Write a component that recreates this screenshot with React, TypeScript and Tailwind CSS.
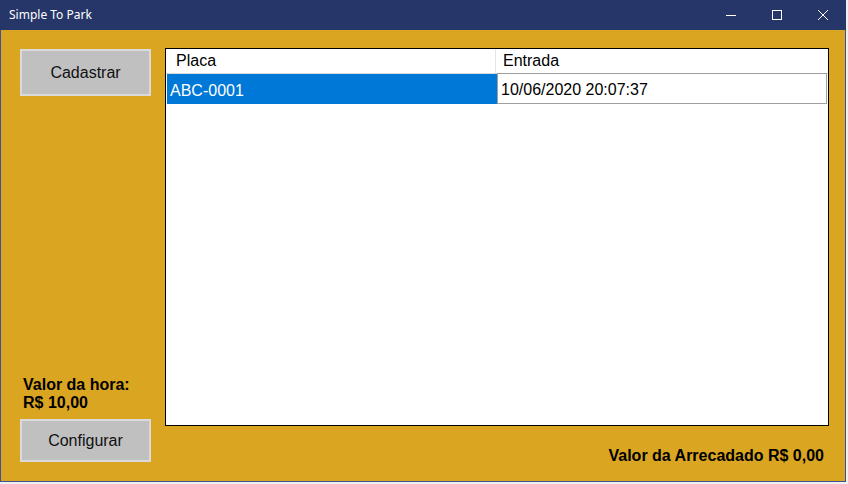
const rows = [{ placa: "ABC-0001", entrada: "10/06/2020 20:07:37" }];

const App = () => {
  return (
    <div className="w-[848px] h-[484px] bg-[#f0f0f0] overflow-hidden">
      {/* Window */}
      <div className="w-[846px] h-[482px] flex flex-col border-l border-r border-b border-[#3f5298] bg-[#daa520]">
        {/* Title bar */}
        <div className="h-[30px] -mx-px flex items-center bg-[#273669] text-white shrink-0">
          <span className="ml-[9px] text-[12px] font-['Noto_Sans',sans-serif] leading-none">
            Simple To Park
          </span>
          <div className="ml-auto flex items-center h-full">
            <div className="w-[46px] h-full flex items-center justify-center">
              <svg width="10" height="10" viewBox="0 0 10 10">
                <line x1="0" y1="5.5" x2="10" y2="5.5" stroke="white" strokeWidth="1" />
              </svg>
            </div>
            <div className="w-[46px] h-full flex items-center justify-center">
              <svg width="10" height="10" viewBox="0 0 10 10">
                <rect x="0.5" y="0.5" width="9" height="9" fill="none" stroke="white" strokeWidth="1" />
              </svg>
            </div>
            <div className="w-[46px] h-full flex items-center justify-center">
              <svg width="10" height="10" viewBox="0 0 10 10">
                <path d="M0 0L10 10M10 0L0 10" stroke="white" strokeWidth="1" />
              </svg>
            </div>
          </div>
        </div>

        {/* Body */}
        <div className="flex-1 min-h-0 flex pl-[19px] pr-[16px] pt-[18px] pb-[16px] font-['Liberation_Sans',Arial,sans-serif] text-black">
          {/* Left column */}
          <div className="w-[131px] flex flex-col pb-[3px]">
            <button className="mt-[1px] h-[47px] w-full border-2 border-[#dadada] bg-[#c0c0c0] text-[16px] text-[#111]">
              Cadastrar
            </button>
            <div className="mt-auto mb-[7px] pl-[3px] text-[16px] font-bold leading-[18px]">
              <div>Valor da hora:</div>
              <div>R$ 10,00</div>
            </div>
            <button className="h-[43px] w-full border-2 border-[#dadada] bg-[#c0c0c0] text-[16px] text-[#111]">
              Configurar
            </button>
          </div>

          {/* Right column */}
          <div className="ml-[14px] flex-1 flex flex-col">
            <div className="h-[378px] shrink-0 border border-black bg-white">
              <div className="flex h-[25px] border-b border-[#d8d8d8] text-[16px]">
                <div className="w-[330px] pl-[10px] flex items-center border-r border-[#e5e5e5]">Placa</div>
                <div className="flex-1 pl-[7px] flex items-center">Entrada</div>
              </div>
              {rows.map((r) => (
                <div key={r.placa} className="flex h-[30px] text-[16px] pr-px">
                  <div className="w-[330px] ml-px pl-[3px] pt-[3px] flex items-center bg-[#0078d7] text-white">
                    {r.placa}
                  </div>
                  <div className="flex-1 -mt-px h-[31px] pl-[3px] pt-[3px] flex items-center border border-[#a0a0a0] bg-white">
                    {r.entrada}
                  </div>
                </div>
              ))}
            </div>
            <div className="mt-[21px] pr-[5px] text-right text-[16px] font-bold leading-[18px]">
              Valor da Arrecadado R$ 0,00
            </div>
          </div>
        </div>
      </div>
    </div>
  );
};

export default App;
